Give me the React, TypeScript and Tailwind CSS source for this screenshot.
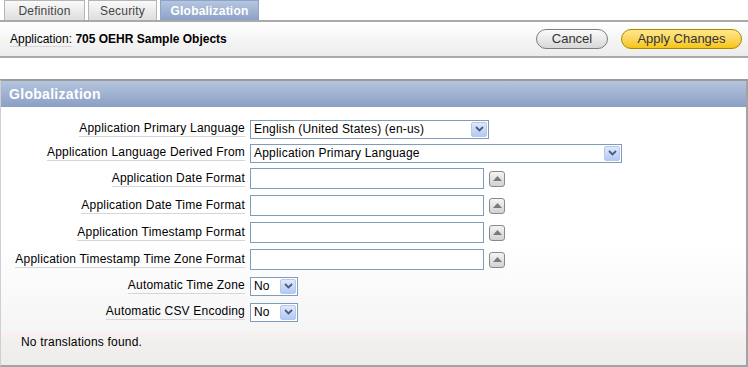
import React from 'react'

const font = { fontFamily: '"Liberation Sans", Arial, sans-serif' }

function Chevron() {
  return (
    <span className="flex h-[15px] w-[16px] items-center justify-center rounded-[2px] border border-[#b4c8ee] bg-gradient-to-b from-[#dfe8fb] to-[#b4c9f4]">
      <svg width="9" height="6" viewBox="0 0 9 6">
        <path d="M1 1 L4.5 4.5 L8 1" fill="none" stroke="#4a5d80" strokeWidth="1.8" />
      </svg>
    </span>
  )
}

function Select({ value, width }: { value: string; width: string }) {
  return (
    <div className={`flex h-[19px] items-center justify-between border border-[#7f9db9] bg-white pl-[3px] pr-[1px] ${width}`}>
      <span className="text-[12px] leading-none tracking-[0.2px] text-black">{value}</span>
      <Chevron />
    </div>
  )
}

function TextInput() {
  return <div className="h-[21px] w-[234px] border border-[#7f9db9] bg-white" />
}

function UpButton() {
  return (
    <span className="ml-[5px] flex h-[16px] w-[16px] items-center justify-center rounded-[3px] border border-[#8a8a8a] bg-gradient-to-b from-[#f4f4f4] to-[#d2d2d2]">
      <svg width="9" height="5" viewBox="0 0 9 5">
        <path d="M0 5 L4.5 0 L9 5 Z" fill="#7a7a7a" />
      </svg>
    </span>
  )
}

function Row({ label, h, children }: { label: string; h: string; children: React.ReactNode }) {
  return (
    <div className={`flex items-center ${h}`}>
      <div className="flex w-[245px] justify-end pr-[1px]">
        <span className="border-b border-[#d6d6d6] pb-[1px] text-[12px] leading-[14px] tracking-[0.2px] text-black">{label}</span>
      </div>
      <div className="flex items-center pl-[4px]">{children}</div>
    </div>
  )
}

function Tab({ label, active, width }: { label: string; active?: boolean; width: string }) {
  if (active) {
    return (
      <div className={`flex h-[20px] items-center justify-center border border-b-0 border-[#8ea3c6] bg-gradient-to-b from-[#b6c6e0] to-[#8ba1c6] text-[12px] font-bold tracking-[0.2px] text-white ${width}`}>
        {label}
      </div>
    )
  }
  return (
    <div className={`flex h-[20px] items-center justify-center border border-b-0 border-[#b5b5b5] bg-gradient-to-b from-[#fafafa] to-[#dedede] text-[12px] tracking-[0.2px] text-[#444] ${width}`}>
      {label}
    </div>
  )
}

export default function App() {
  return (
    <div className="h-[367px] w-[748px] overflow-hidden bg-white" style={font}>
      {/* tabs */}
      <div className="flex h-[20px] items-end gap-[3px] pl-[4px]">
        <Tab label="Definition" width="w-[81px]" />
        <Tab label="Security" width="w-[69px]" />
        <Tab label="Globalization" active width="w-[99px]" />
      </div>

      {/* page header */}
      <div className="flex h-[38px] items-center justify-between border-t-2 border-b-2 border-[#a9a9a9] bg-gradient-to-b from-white to-[#ececec] pl-[10px] pr-[6px]">
        <div className="text-[12px] text-black">
          <span className="border-b border-[#d6d6d6]">Application:</span>{' '}
          <span className="font-bold">705 OEHR Sample Objects</span>
        </div>
        <div className="flex items-center gap-[13px]">
          <button className="flex h-[20px] w-[72px] items-center justify-center rounded-full border border-[#7d7d7d] bg-gradient-to-b from-[#fbfbfb] to-[#d7d7d7] text-[13px] text-[#333]">
            Cancel
          </button>
          <button className="flex h-[20px] w-[121px] items-center justify-center rounded-full border border-[#a88a00] bg-gradient-to-b from-[#ffe88a] to-[#f6c400] text-[13px] text-[#333]">
            Apply Changes
          </button>
        </div>
      </div>

      {/* region */}
      <div className="mt-[21px] border-t-2 border-r-2 border-b-2 border-l border-t-[#9a9a9a] border-r-[#a3a3a3] border-b-[#a3a3a3] border-l-[#cfcfcf]">
        <div className="flex h-[26px] items-center bg-gradient-to-b from-[#b5c5df] to-[#8a9fc4] pl-[8px] text-[14px] font-bold tracking-[0.3px] text-white">
          Globalization
        </div>
        <div className="bg-gradient-to-b from-white from-60% to-[#f5f5f5] pt-[10px] pb-[7px]">
          <Row label="Application Primary Language" h="h-[24px]">
            <Select value="English (United States) (en-us)" width="w-[239px]" />
          </Row>
          <Row label="Application Language Derived From" h="h-[24px]">
            <Select value="Application Primary Language" width="w-[372px]" />
          </Row>
          <Row label="Application Date Format" h="h-[27px]">
            <TextInput />
            <UpButton />
          </Row>
          <Row label="Application Date Time Format" h="h-[27px]">
            <TextInput />
            <UpButton />
          </Row>
          <Row label="Application Timestamp Format" h="h-[27px]">
            <TextInput />
            <UpButton />
          </Row>
          <Row label="Application Timestamp Time Zone Format" h="h-[27px]">
            <TextInput />
            <UpButton />
          </Row>
          <Row label="Automatic Time Zone" h="h-[26px]">
            <Select value="No" width="w-[48px]" />
          </Row>
          <Row label="Automatic CSV Encoding" h="h-[26px]">
            <Select value="No" width="w-[48px]" />
          </Row>
        </div>
        <div className="h-[33px] bg-gradient-to-b from-[#f9f0f0] via-[#f2f0ee] via-30% to-[#ededed] pl-[20px] pt-[1px] text-[12px] tracking-[0.2px] text-black">
          No translations found.
        </div>
      </div>
    </div>
  )
}
